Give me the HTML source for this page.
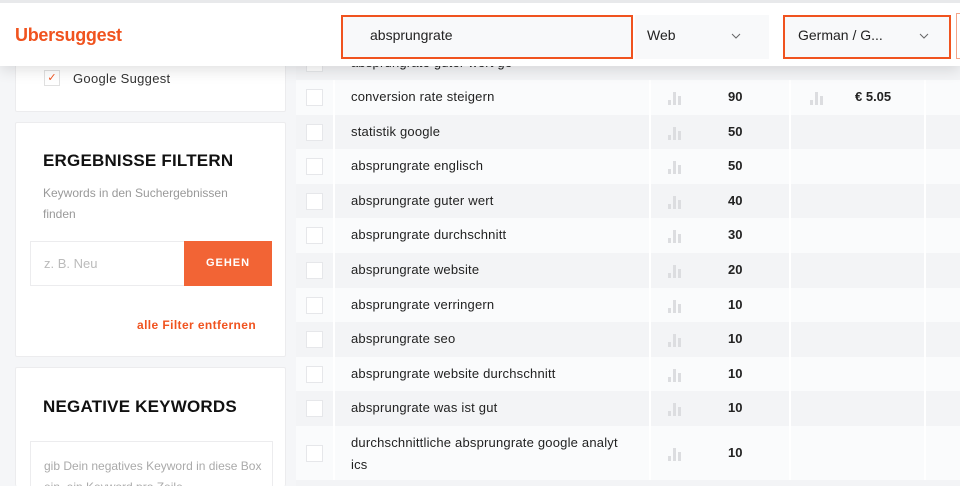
<!DOCTYPE html>
<html><head><meta charset="utf-8"><style>
*{box-sizing:border-box;margin:0;padding:0}
html{width:960px;height:486px;overflow:hidden}
body{width:960px;height:486px;overflow:hidden;background:#f5f6f8;font-family:"Liberation Sans",sans-serif;position:relative;color:#222}
.hdr{position:absolute;left:0;top:3px;width:960px;height:63px;background:#fff;box-shadow:0 4px 14px rgba(0,0,0,.12);z-index:5}
.top{position:absolute;left:0;top:0;width:960px;height:3px;background:#e8e9eb;z-index:6}
.logo{position:absolute;left:15px;top:22px;font-size:18px;font-weight:bold;color:#f0531f;letter-spacing:-0.3px}
.box{position:absolute;top:12px;height:44px;background:#f8f9fa;font-size:14px;color:#222;padding-top:12px}
.box svg{position:absolute;top:18px}
.card{position:absolute;left:15px;width:271px;background:#fff;border:1px solid #ececee;border-radius:2px;overflow:hidden}
h2{position:absolute;left:27px;font-size:17px;font-weight:bold;color:#111;letter-spacing:0.2px}
.row{position:absolute;left:296px;width:664px;height:35px;font-size:13px;color:#222}
.row .cb{position:absolute;left:10px;top:9px;width:17px;height:17px;background:#fff;border:1px solid #e6e7ea}
.row .kw{position:absolute;left:55px;top:9px;letter-spacing:0.2px}
.row .sep{position:absolute;top:0;bottom:0;width:2px;background:#fff}
.row .vol{position:absolute;left:432px;top:9px;font-weight:bold;font-size:13px}
.bars{position:absolute;width:14px;height:14px}
.bars i{position:absolute;bottom:0;width:3px;background:#dcdde0}
</style></head><body>
<div class="top"></div>
<div class="hdr">
<div class="logo">Ubersuggest</div>
<div class="box" style="left:341px;width:292px;border:2px solid #f0531f;padding-left:27px;padding-top:10px">absprungrate</div>
<div class="box" style="left:635px;width:134px;padding-left:12px">Web<svg style="left:96px" width="10" height="6" viewBox="0 0 10 6"><path d="M1 1l4 4 4-4" fill="none" stroke="#666" stroke-width="1"/></svg></div>
<div class="box" style="left:783px;width:168px;border:2px solid #f0531f;padding-left:13px;padding-top:10px">German / G...<svg style="left:134px;top:16px" width="10" height="6" viewBox="0 0 10 6"><path d="M1 1l4 4 4-4" fill="none" stroke="#666" stroke-width="1"/></svg></div>
<div style="position:absolute;left:956px;top:10px;width:6px;height:46px;border:1px solid #f4a58a"></div>
</div>

<div class="card" style="top:40px;height:72px">
<div style="position:absolute;left:28px;top:29px;width:16px;height:16px;border:1px solid #e0e0e0;color:#f0531f;font-size:11px;text-align:center;line-height:14px">&#10003;</div>
<div style="position:absolute;left:57px;top:30px;font-size:13px;color:#333;letter-spacing:0.3px">Google Suggest</div>
</div>
<div class="card" style="top:122px;height:235px">
<h2 style="top:28px;left:27px">ERGEBNISSE FILTERN</h2>
<div style="position:absolute;left:27px;top:60px;font-size:12px;color:#999;line-height:21px;width:220px">Keywords in den Suchergebnissen finden</div>
<div style="position:absolute;left:14px;top:118px;width:155px;height:45px;border:1px solid #ececee;font-size:13px;color:#bbb;padding:14px 0 0 13px">z. B. Neu</div>
<div style="position:absolute;left:168px;top:118px;width:88px;height:45px;background:#f26435;color:#fff;font-weight:bold;font-size:11px;text-align:center;line-height:45px;letter-spacing:1px">GEHEN</div>
<div style="position:absolute;left:121px;top:195px;font-size:12px;font-weight:bold;color:#f0531f;letter-spacing:0.4px">alle Filter entfernen</div>
</div>
<div class="card" style="top:367px;height:119px;border-bottom:none">
<h2 style="top:29px;left:27px">NEGATIVE KEYWORDS</h2>
<div style="position:absolute;left:14px;top:73px;width:243px;height:46px;border:1px solid #ececee;border-bottom:none;font-size:12px;color:#aaa;padding:14px 0 0 13px;line-height:21px;overflow:hidden">gib Dein negatives Keyword in diese Box ein, ein Keyword pro Zeile</div>
</div>

<div id="rows"></div>
<div class="row" style="top:46px;background:#f3f4f6"><div class="cb"></div><div class="kw">absprungrate guter wert ge</div></div>
<div class="row" style="top:80px;background:#fafbfc"><div class="cb"></div><div class="kw">conversion rate steigern</div><div class="sep" style="left:37px"></div><div class="sep" style="left:353px"></div><div class="sep" style="left:493px"></div><div class="sep" style="left:628px"></div><div class="bars" style="left:372px;top:11px"><i style="left:0;height:5px"></i><i style="left:5px;height:13px"></i><i style="left:10px;height:9px"></i></div><div class="vol">90</div><div class="bars" style="left:514px;top:11px"><i style="left:0;height:5px"></i><i style="left:5px;height:13px"></i><i style="left:10px;height:9px"></i></div><div class="vol" style="left:559px">€ 5.05</div></div>
<script>
var d=[["statistik google","50"],["absprungrate englisch","50"],["absprungrate guter wert","40"],["absprungrate durchschnitt","30"],["absprungrate website","20"],["absprungrate verringern","10"],["absprungrate seo","10"],["absprungrate website durchschnitt","10"],["absprungrate was ist gut","10"]];
var h="";
d.forEach(function(r,i){var t=114.6+i*34.6;var bg=(i%2==0)?"#f3f4f6":"#fafbfc";
h+='<div class="row" style="top:'+t+'px;background:'+bg+'"><div class="cb"></div><div class="kw">'+r[0]+'</div><div class="sep" style="left:37px"></div><div class="sep" style="left:353px"></div><div class="sep" style="left:493px"></div><div class="sep" style="left:628px"></div><div class="bars" style="left:372px;top:11px"><i style="left:0;height:5px"></i><i style="left:5px;height:13px"></i><i style="left:10px;height:9px"></i></div><div class="vol">'+r[1]+'</div></div>';});
h+='<div class="row" style="top:426px;height:54px;background:#fafbfc"><div class="cb" style="top:19px"></div><div class="kw" style="top:6px;line-height:22px;width:290px">durchschnittliche absprungrate google analyt<br>ics</div><div class="sep" style="left:37px"></div><div class="sep" style="left:353px"></div><div class="sep" style="left:493px"></div><div class="sep" style="left:628px"></div><div class="bars" style="left:372px;top:21px"><i style="left:0;height:5px"></i><i style="left:5px;height:13px"></i><i style="left:10px;height:9px"></i></div><div class="vol" style="top:19px">10</div></div>';
h+='<div class="row" style="top:480px;height:6px;background:#f3f4f6"></div>';
document.getElementById("rows").innerHTML=h;
</script>
</body></html>
